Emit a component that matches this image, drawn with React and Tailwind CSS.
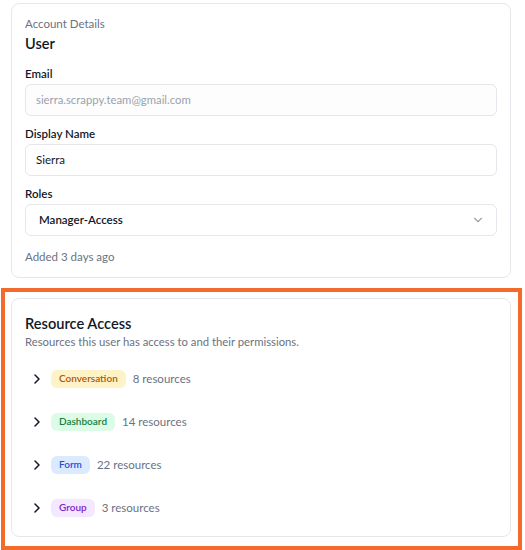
import React from "react";
import { ChevronDown, ChevronRight } from "lucide-react";

const resources = [
  { name: "Conversation", count: 8, tone: "bg-[#fef3c7] text-[#b45309]" },
  { name: "Dashboard", count: 14, tone: "bg-[#dcfce7] text-[#15803d]" },
  { name: "Form", count: 22, tone: "bg-[#dbeafe] text-[#1d4ed8]" },
  { name: "Group", count: 3, tone: "bg-[#f3e8ff] text-[#7e22ce]" },
];

const Field = ({ label, children }) => (
  <div className="mt-2">
    <label className="block text-[11.5px] leading-5 font-semibold text-gray-900">
      {label}
    </label>
    {children}
  </div>
);

const App = () => {
  return (
    <div
      className="w-[525px] h-[550px] bg-white pt-[3px] px-[11px] overflow-hidden"
      style={{ fontFamily: 'Lato, "Noto Sans", sans-serif' }}
    >
      {/* Account details */}
      <div className="w-[500px] rounded-lg border border-gray-200 px-[13px] pt-3 pb-3">
        <p className="text-[11.5px] leading-4 text-gray-500">Account Details</p>
        <h2 className="text-[14.5px] leading-6 font-semibold text-gray-900">User</h2>

        <Field label="Email">
          <div className="h-8 flex items-center rounded-md border border-gray-200 bg-gray-50/40 px-[10px] text-[11.3px] text-gray-400">
            sierra.scrappy.team@gmail.com
          </div>
        </Field>

        <Field label="Display Name">
          <div className="h-8 flex items-center rounded-md border border-gray-200 px-[10px] text-[11.5px] text-gray-900">
            Sierra
          </div>
        </Field>

        <Field label="Roles">
          <div className="h-8 flex items-center justify-between rounded-md border border-gray-200 pl-[13px] pr-[11px] text-[11.5px] font-semibold text-gray-900">
            <span>Manager-Access</span>
            <ChevronDown className="w-3.5 h-3.5 text-gray-400" strokeWidth={2} />
          </div>
        </Field>

        <p className="mt-[13px] text-[11.5px] leading-4 text-gray-500">Added 3 days ago</p>
      </div>

      {/* Resource access */}
      <div className="relative mt-5 w-[500px]">
        <div className="absolute -left-[10px] -right-[11px] -top-[10px] -bottom-[13px] border-4 border-[#f26b2a] pointer-events-none" />
        <div className="rounded-lg border border-gray-200 px-[13px] pt-[15px] pb-[7px]">
          <h3 className="text-[14.6px] leading-5 font-semibold text-gray-900">Resource Access</h3>
          <p className="text-[11.3px] leading-4 text-gray-500">
            Resources this user has access to and their permissions.
          </p>

          <div className="mt-[7px]">
            {resources.map((r) => (
              <div key={r.name} className="h-[43px] flex items-center">
                <ChevronRight className="w-4 h-4 ml-1 text-gray-900" strokeWidth={2.25} />
                <span
                  className={`ml-[6px] h-[18px] flex items-center rounded-md px-2 text-[10px] font-semibold ${r.tone}`}
                >
                  {r.name}
                </span>
                <span className="ml-[7px] text-[11.5px] text-gray-500">{r.count} resources</span>
              </div>
            ))}
          </div>
        </div>
      </div>
    </div>
  );
};

export default App;
